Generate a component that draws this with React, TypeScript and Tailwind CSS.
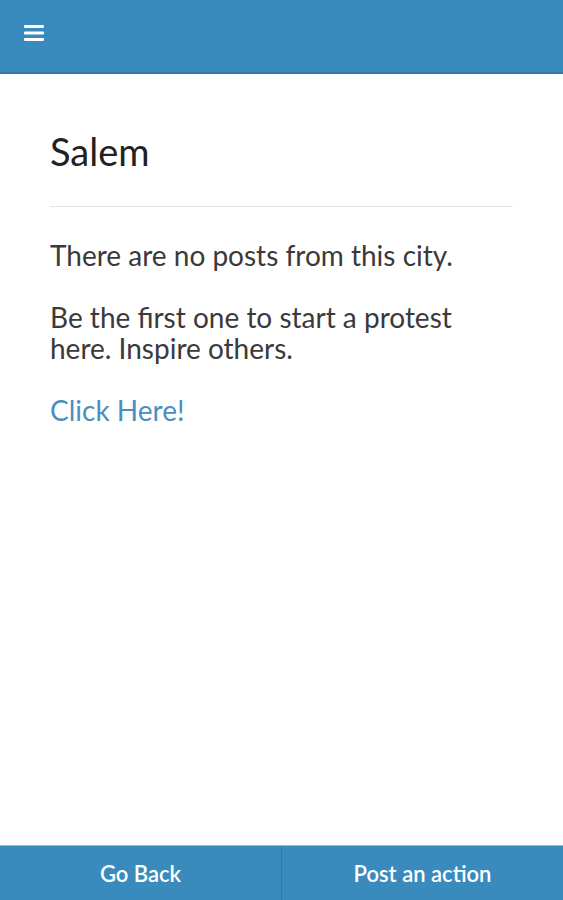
export default function App() {
  return (
    <div
      className="flex flex-col h-[900px] w-full bg-white text-[#333]"
      style={{ fontFamily: '"Source Sans Pro", Lato, "Open Sans", sans-serif' }}
    >
      {/* top bar */}
      <div className="h-[74px] shrink-0 bg-[#3a8bbd] border-b-2 border-[#2f7aab] flex items-start pt-[24px] pl-[22px]">
        <svg width="24" height="18" viewBox="0 0 24 18" className="text-white">
          <rect x="2" y="1" width="20" height="3" rx="1" fill="currentColor" />
          <rect x="2" y="7.5" width="20" height="3" rx="1" fill="currentColor" />
          <rect x="2" y="14" width="20" height="3" rx="1" fill="currentColor" />
        </svg>
      </div>

      {/* content */}
      <div className="flex-1 px-[50px] pt-[52px]">
        <h1 className="text-[38px] leading-[50px] text-[#222]">Salem</h1>
        <div className="mt-[30px] border-t border-[#e6e6e6]" />
        <div className="mt-[33px] text-[28px] leading-[31px] text-[#3a3a3a]">
          <p>There are no posts from this city.</p>
          <p className="mt-[31px]">
            Be the first one to start a protest here. Inspire others.
          </p>
          <a href="#" className="block mt-[31px] text-[#4a8fc0]">
            Click Here!
          </a>
        </div>
      </div>

      {/* bottom buttons */}
      <div className="h-[55px] shrink-0 flex bg-[#3a8bbd] border-t border-[#8fbcd9] text-white text-[22px] font-semibold">
        <button className="flex-1 border-r border-[#2f78a8]">Go Back</button>
        <button className="flex-1">Post an action</button>
      </div>
    </div>
  );
}
